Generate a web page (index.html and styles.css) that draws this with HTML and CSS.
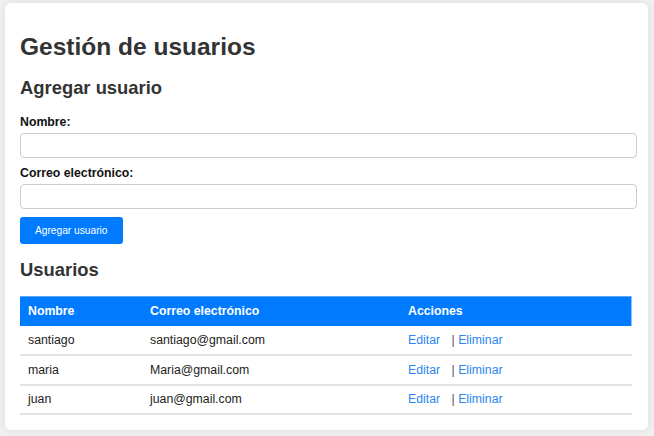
FILE: index.html
```html
<!DOCTYPE html>
<html lang="es">
<head>
<meta charset="utf-8">
<title>Gestión de usuarios</title>
<link rel="stylesheet" href="styles.css">
</head>
<body>
<div class="card">
  <h1>Gestión de usuarios</h1>
  <h2>Agregar usuario</h2>
  <form class="form">
    <label class="label" for="nombre">Nombre:</label>
    <input class="input" id="nombre" type="text">
    <label class="label" for="correo">Correo electrónico:</label>
    <input class="input" id="correo" type="email">
    <button class="btn" type="button">Agregar usuario</button>
  </form>
  <h2 class="h2-list">Usuarios</h2>
  <table class="table">
    <thead>
      <tr><th class="c1">Nombre</th><th class="c2">Correo electrónico</th><th class="c3">Acciones</th></tr>
    </thead>
    <tbody>
      <tr><td>santiago</td><td>santiago@gmail.com</td><td><a class="link edit" href="#">Editar</a> <span class="sep">|</span> <a class="link" href="#">Eliminar</a></td></tr>
      <tr><td>maria</td><td>Maria@gmail.com</td><td><a class="link edit" href="#">Editar</a> <span class="sep">|</span> <a class="link" href="#">Eliminar</a></td></tr>
      <tr><td>juan</td><td>juan@gmail.com</td><td><a class="link edit" href="#">Editar</a> <span class="sep">|</span> <a class="link" href="#">Eliminar</a></td></tr>
    </tbody>
  </table>
</div>
</body>
</html>
```

FILE: styles.css
```css
html, body {
  margin: 0;
  padding: 0;
}
body {
  background: #f0f0f0;
  font-family: "Liberation Sans", Arial, sans-serif;
  color: #333;
  padding: 3px 6px 6px 5px;
}
.card {
  background: #fff;
  border-radius: 6px;
  box-shadow: 0 0 8px rgba(0, 0, 0, 0.08);
  padding: 15px 11px 15px 15px;
  height: 427px;
  box-sizing: border-box;
}
h1 {
  font-size: 24.5px;
  margin: 15px 0 16px;
  color: #333;
}
h2 {
  font-size: 18.4px;
  margin: 16px 0 15px;
  color: #333;
}
.form {
  display: flex;
  flex-direction: column;
  align-items: flex-start;
}
.label {
  font-size: 12.3px;
  font-weight: bold;
  color: #111;
  margin: 1px 0 4px;
  line-height: 14px;
}
.input {
  width: 100%;
  height: 25px;
  box-sizing: border-box;
  border: 1px solid #ccc;
  border-radius: 4px;
  margin: 0 0 7px;
  padding: 4px 6px;
  font-family: inherit;
}
.btn {
  background: #007bff;
  color: #fff;
  border: none;
  border-radius: 3px;
  height: 27px;
  margin-top: 1px;
  padding: 0 15px;
  font-family: "Liberation Sans", Arial, sans-serif;
  font-size: 10.2px;
  cursor: pointer;
}
.h2-list {
  margin-top: 15px;
  margin-bottom: 15px;
}
.table {
  width: 612px;
  border-collapse: collapse;
  font-size: 12.3px;
}
.table th {
  background: #007bff;
  color: #fff;
  text-align: left;
  font-weight: bold;
  padding: 0 8px;
  height: 29px;
  box-sizing: border-box;
  border-top: 1px solid #5aa9ff;
}
.table th.c3 {
  border-right: 1px solid #8cc2ff;
}
.table th.c1 { width: 122px; }
.table th.c2 { width: 258px; }
.table td {
  padding: 0 8px;
  height: 29.5px;
  box-sizing: border-box;
  border-bottom: 2px solid #e3e3e3;
  color: #222;
}
.link {
  color: #2b86f0;
  text-decoration: none;
}
.edit {
  margin-right: 8px;
}
.sep {
  color: #555;
}
```
